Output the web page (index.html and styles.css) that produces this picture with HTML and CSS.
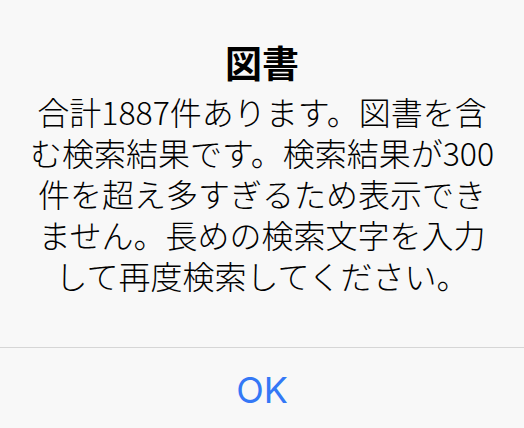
FILE: index.html
```html
<!DOCTYPE html>
<html lang="ja">
<head>
<meta charset="utf-8">
<link rel="stylesheet" href="styles.css">
</head>
<body>
<div class="alert">
  <div class="alert-content">
    <h1 class="alert-title">図書</h1>
    <p class="alert-message">合計1887件あります。図書を含<br>む検索結果です。検索結果が300<br>件を超え多すぎるため表示でき<br>ません。長めの検索文字を入力<br>して再度検索してください。</p>
  </div>
  <div class="alert-actions">
    <button class="alert-button">OK</button>
  </div>
</div>
</body>
</html>
```
FILE: styles.css
```css
html, body {
  margin: 0;
  padding: 0;
  background: #f8f8f8;
}
.alert {
  width: 524px;
  height: 428px;
  display: flex;
  flex-direction: column;
  font-family: "Noto Sans CJK JP", "Noto Sans", sans-serif;
  color: #000;
}
.alert-content {
  padding: 40px 10px 0;
  height: 348px;
  box-sizing: border-box;
  border-bottom: 1px solid #d6d6d6;
  text-align: center;
}
.alert-title {
  margin: 0;
  font-size: 37px;
  line-height: 44px;
  font-weight: 700;
}
.alert-message {
  margin: 7px 0 0;
  font-size: 32px;
  line-height: 41px;
  font-weight: 300;
  white-space: nowrap;
}
.alert-actions {
  flex: 1;
  display: flex;
}
.alert-button {
  flex: 1;
  border: 0;
  background: transparent;
  color: #3478f6;
  font-family: "Inter", "Liberation Sans", sans-serif;
  font-size: 36px;
  font-weight: 400;
  padding: 4px 0 0;
  margin: 0;
}
```
